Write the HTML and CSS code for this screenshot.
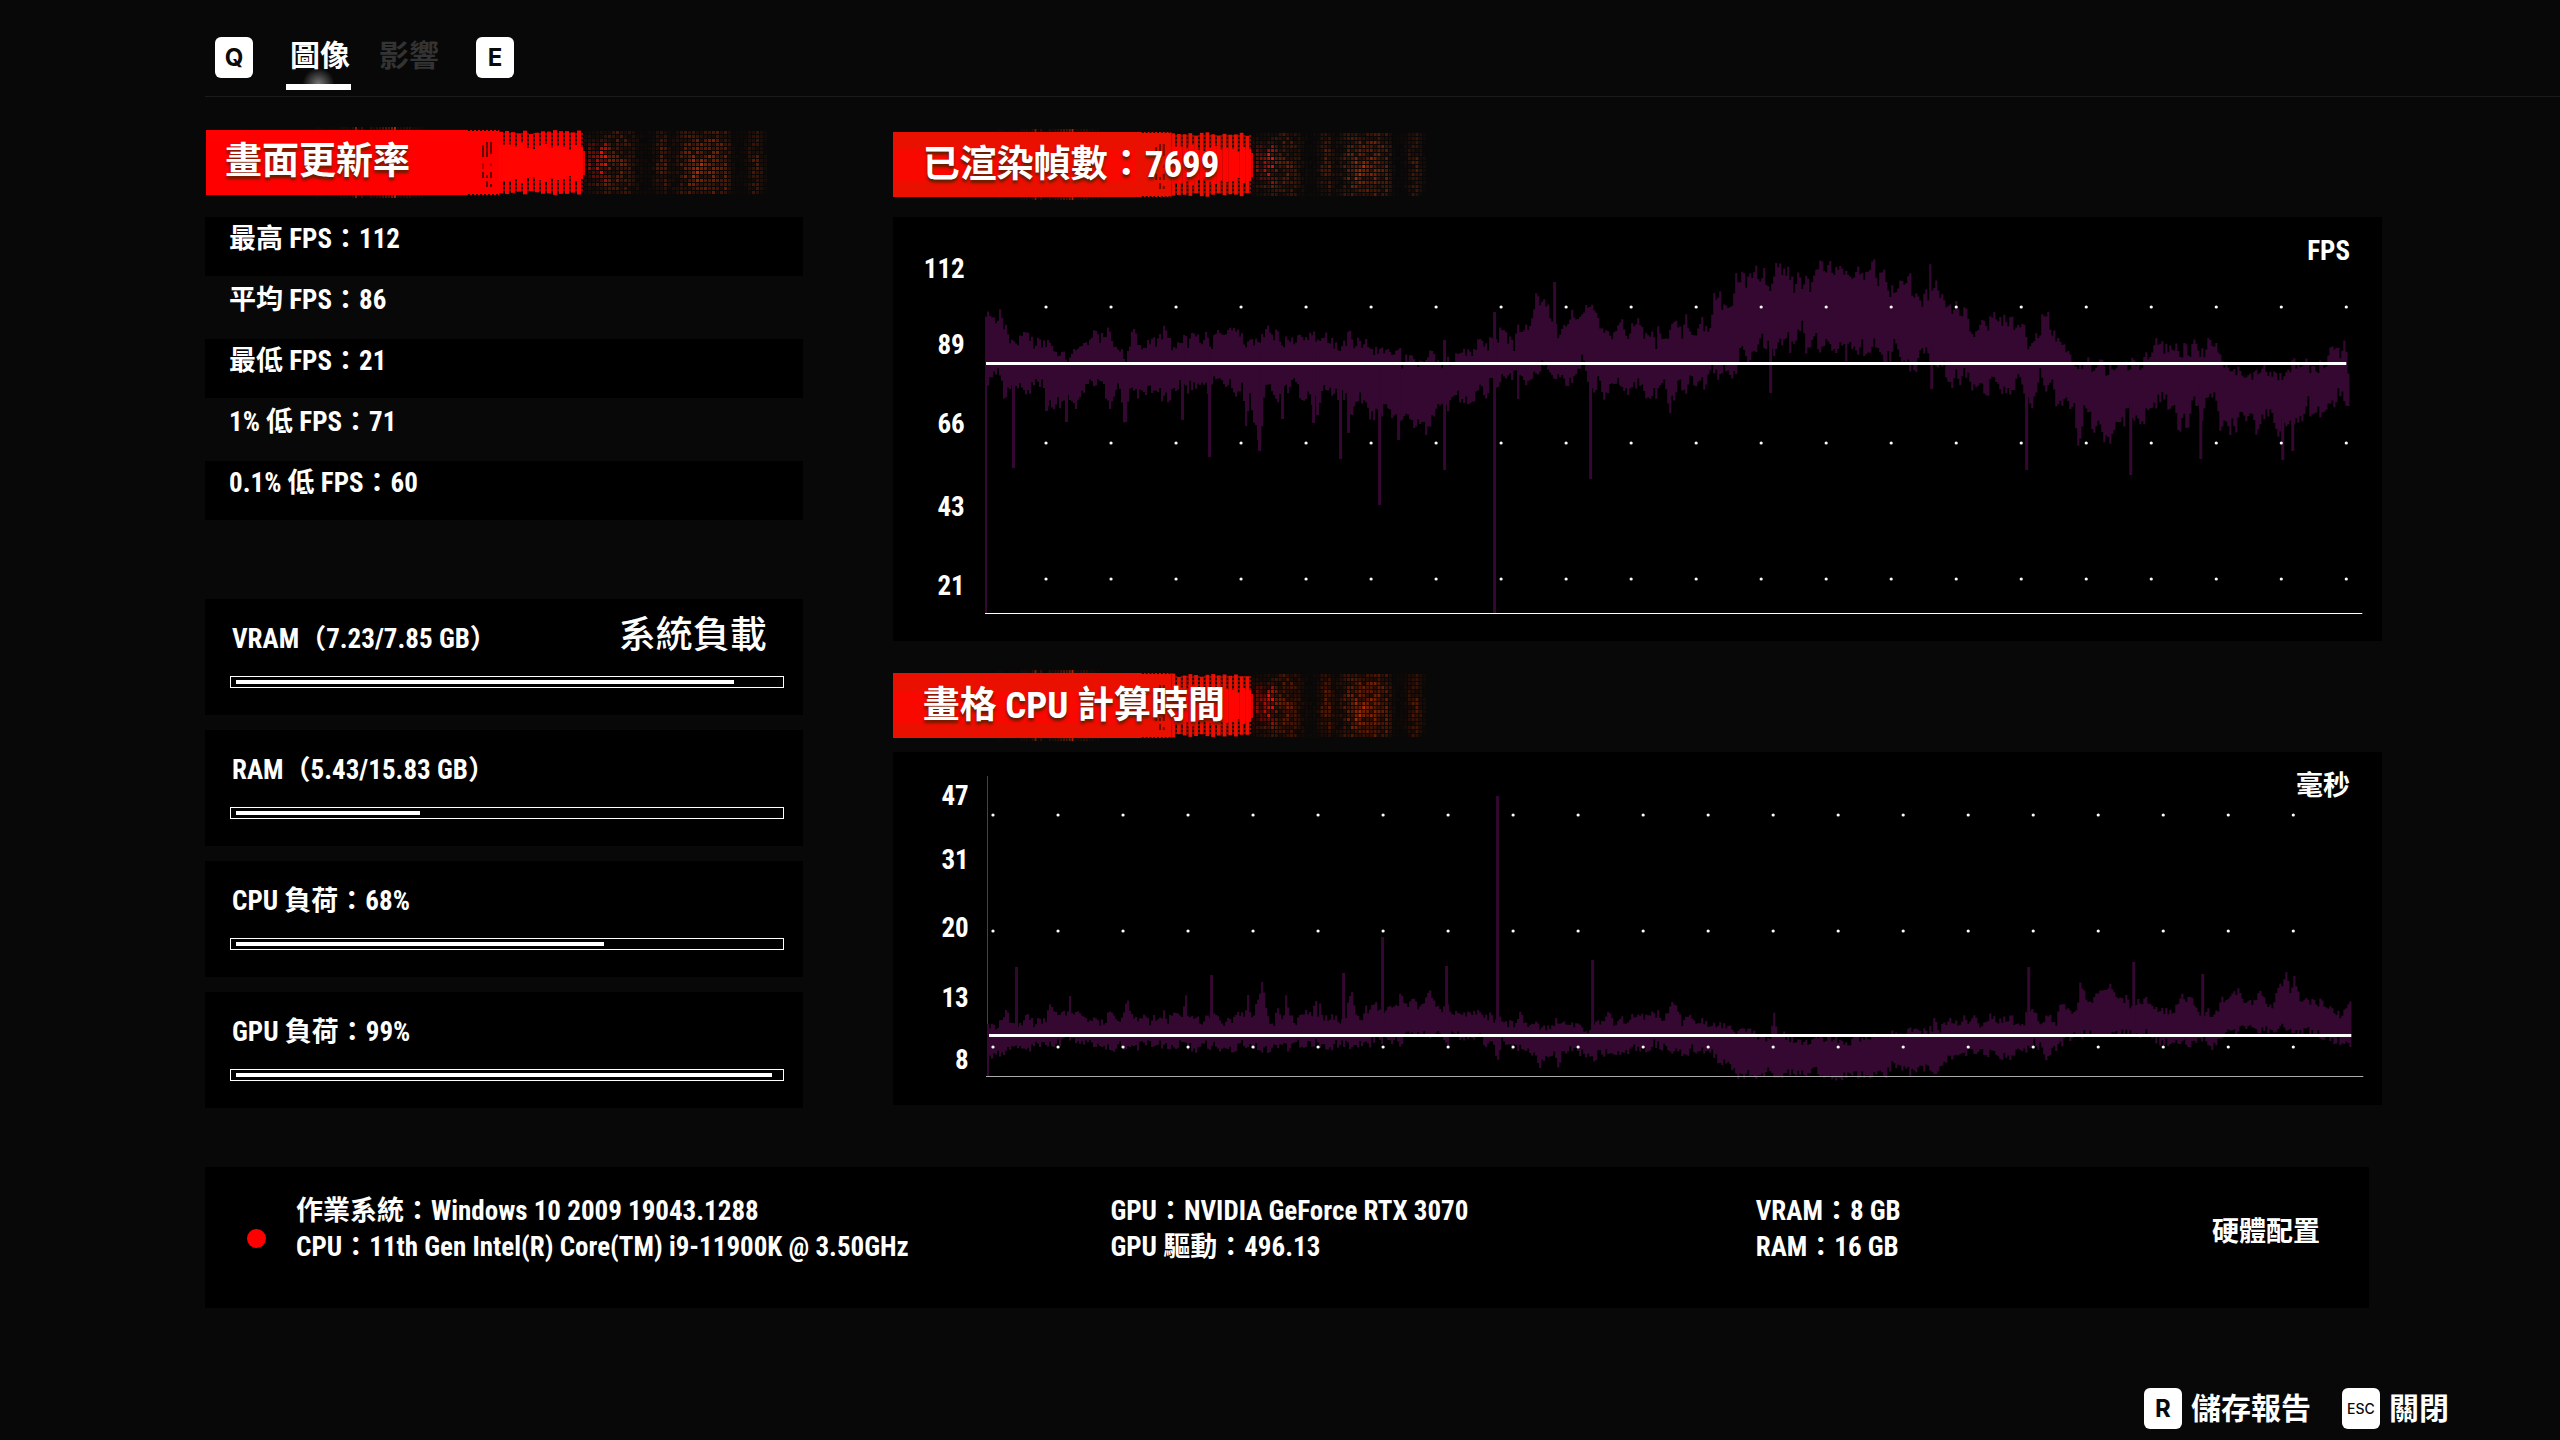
FILE: index.html
```html
<!DOCTYPE html>
<html lang="zh-Hant">
<head>
<meta charset="utf-8">
<title>效能測試結果</title>
<link rel="stylesheet" href="styles.css">
</head>
<body>
<header class="topbar">
  <kbd class="key">Q</kbd>
  <nav class="tabs">
    <a class="tab tab-active" href="#graphics">圖像</a>
    <a class="tab" href="#impact">影響</a>
  </nav>
  <kbd class="key">E</kbd>
</header>

<main class="report">
  <div class="columns">
    <section class="stats">
      <h2 class="banner"><svg class="banner-art" viewBox="0 0 600 73" preserveAspectRatio="none" aria-hidden="true"></svg><span class="banner-text">畫面更新率</span></h2>
      <ul class="rates">
        <li class="rate">最高 FPS：112</li>
        <li class="rate">平均 FPS：86</li>
        <li class="rate">最低 FPS：21</li>
        <li class="rate">1% 低 FPS：71</li>
        <li class="rate">0.1% 低 FPS：60</li>
      </ul>
      <div class="loads">
        <div class="load">
          <div class="load-head"><span>VRAM（7.23/7.85 GB）</span><h3 class="load-title">系統負載</h3></div>
          <div class="meter"><div class="meter-fill" style="width:92%"></div></div>
        </div>
        <div class="load">
          <div class="load-head"><span>RAM（5.43/15.83 GB）</span></div>
          <div class="meter"><div class="meter-fill" style="width:34%"></div></div>
        </div>
        <div class="load">
          <div class="load-head"><span>CPU 負荷：68%</span></div>
          <div class="meter"><div class="meter-fill" style="width:68%"></div></div>
        </div>
        <div class="load">
          <div class="load-head"><span>GPU 負荷：99%</span></div>
          <div class="meter"><div class="meter-fill" style="width:99%"></div></div>
        </div>
      </div>
    </section>

    <section class="charts">
      <h2 class="banner banner-wide"><svg class="banner-art" viewBox="0 0 600 73" preserveAspectRatio="none" aria-hidden="true"></svg><span class="banner-text">已渲染幀數：7699</span></h2>
      <figure class="chart chart-fps">
        <div class="axis"><span>112</span><span>89</span><span>66</span><span>43</span><span>21</span></div>
        <svg class="plot" id="fps-plot" viewBox="985 217 1397 424" preserveAspectRatio="none"></svg>
        <figcaption class="unit">FPS</figcaption>
      </figure>
      <h2 class="banner banner-wide"><svg class="banner-art" viewBox="0 0 600 73" preserveAspectRatio="none" aria-hidden="true"></svg><span class="banner-text">畫格 CPU 計算時間</span></h2>
      <figure class="chart chart-cpu">
        <div class="axis"><span>47</span><span>31</span><span>20</span><span>13</span><span>8</span></div>
        <svg class="plot" id="cpu-plot" viewBox="985 752 1397 353" preserveAspectRatio="none"></svg>
        <figcaption class="unit">毫秒</figcaption>
      </figure>
    </section>
  </div>

  <section class="hardware">
    <span class="record-dot"></span>
    <div class="spec">
      <p>作業系統：Windows 10 2009 19043.1288</p>
      <p>CPU：11th Gen Intel(R) Core(TM) i9-11900K @ 3.50GHz</p>
    </div>
    <div class="spec">
      <p>GPU：NVIDIA GeForce RTX 3070</p>
      <p>GPU 驅動：496.13</p>
    </div>
    <div class="spec">
      <p>VRAM：8 GB</p>
      <p>RAM：16 GB</p>
    </div>
    <h3 class="hardware-title">硬體配置</h3>
  </section>
</main>

<footer class="actions">
  <button class="action" type="button"><kbd class="key">R</kbd>儲存報告</button>
  <button class="action" type="button"><kbd class="key key-small">ESC</kbd>關閉</button>
</footer>
<script src="charts.js"></script>
</body>
</html>
```
FILE: styles.css
```css
* { box-sizing: border-box; margin: 0; padding: 0; }

body {
  min-height: 100vh;
  background: #080808;
  color: #fff;
  font-family: "Roboto Condensed", "Liberation Sans Narrow", "Noto Sans CJK TC", sans-serif;
  font-size: 27px;
  font-weight: 700;
  line-height: 36px;
}

.topbar {
  display: flex;
  align-items: flex-start;
  height: 97px;
  margin-left: 205px;
  padding: 37px 10px 0;
  border-bottom: 1px solid #1a1a1a;
}

.key {
  display: flex;
  align-items: center;
  justify-content: center;
  width: 38px;
  height: 41px;
  border-radius: 6px;
  background: #fff;
  color: #0a0a0a;
  font-family: Inter, "Liberation Sans", sans-serif;
  font-size: 24px;
  font-weight: 700;
  line-height: 28px;
}
.key-small { font-size: 14px; font-weight: 500; }

.tabs { display: flex; gap: 24px; margin: 0 36px 0 33px; }
.tab {
  height: 53px;
  padding: 0 1px 0 4px;
  color: #333;
  font-size: 30px;
  line-height: 38px;
  text-decoration: none;
}
.tab-active {
  border-bottom: 6px solid #fff;
  background: radial-gradient(ellipse 16px 16px at 50% 100%, #777, transparent);
  color: #fff;
}

.report { padding: 33px 178px 0 205px; }
.columns { display: grid; grid-template-columns: 598fr 1490fr; column-gap: 90px; }

.banner { position: relative; height: 65px; font-size: 37px; line-height: 64px; padding-left: 20px; }
.banner-wide { padding-left: 30px; line-height: 66px; }
.banner-art { position: absolute; top: -4px; left: 1px; width: 600px; height: 73px; }
.banner-wide .banner-art { width: 570px; left: 0; }
.banner-text { position: relative; text-shadow: 0 3px 3px #5a2000; }

.rates { display: grid; gap: 2px; margin-top: 22px; list-style: none; }
.rate { height: 59px; padding-left: 24px; line-height: 44px; }
.rate:nth-child(odd) { background: #000; }

.loads { display: grid; gap: 15px; margin-top: 79px; }
.load { height: 116px; padding: 16px 19px 0 25px; background: #000; }
.load-head { display: flex; justify-content: space-between; height: 61px; padding-left: 2px; line-height: 48px; }
.load-title { padding-right: 17px; font-size: 37px; font-weight: 500; line-height: 42px; }
.meter { height: 12px; padding: 3px 5px; border: 1px solid #fff; }
.meter-fill { height: 4px; background: #fff; }

.charts { padding-top: 2px; }
.chart { position: relative; display: grid; grid-template-columns: 92px 1fr; background: #000; }
.chart-fps { height: 424px; margin: 20px 0 32px; }
.chart-cpu { height: 353px; margin-top: 14px; }
.axis { display: grid; align-content: start; padding-right: 20px; text-align: right; }
.chart-fps .axis { grid-template-rows: 76px 79px 83px 79px 36px; padding-top: 34px; }
.chart-cpu .axis { grid-template-rows: 64px 68px 70px 62px 36px; padding-top: 26px; padding-right: 16px; }
.plot { display: block; width: 100%; height: 100%; }
.series { fill: #340830; }
.unit { position: absolute; top: 16px; right: 32px; }

.hardware {
  display: grid;
  grid-template-columns: 91px 814fr 645fr 456fr auto;
  height: 141px;
  margin: 59px 13px 0 0;
  padding: 26px 49px 0 0;
  background: #000;
}
.record-dot { width: 19px; height: 19px; margin: 36px 0 0 42px; border-radius: 50%; background: #f00; }
.hardware-title { padding-top: 21px; font-size: 27px; }

.actions { display: flex; justify-content: flex-end; gap: 31px; padding: 80px 111px 11px 0; }
.action {
  display: flex;
  align-items: center;
  gap: 9px;
  height: 41px;
  border: 0;
  background: none;
  color: #fff;
  font: inherit;
  font-size: 30px;
}
```
FILE: charts.js
```js
const NS = "http://www.w3.org/2000/svg";

function add(parent, name, attrs) {
  const node = document.createElementNS(NS, name);
  for (const key in attrs) node.setAttribute(key, attrs[key]);
  parent.appendChild(node);
  return node;
}

function noise(n) {
  const v = Math.sin(n * 127.1) * 43758.5453;
  return v - Math.floor(v);
}

// Linear value of a flat [x, y, x, y, ...] list at x.
function valueAt(points, x) {
  if (x <= points[0]) return points[1];
  for (let i = 2; i < points.length; i += 2) {
    if (x <= points[i]) {
      const t = (x - points[i - 2]) / (points[i] - points[i - 2]);
      return points[i - 1] + t * (points[i + 1] - points[i - 1]);
    }
  }
  return points[points.length - 1];
}

function drawSeries(svg, s) {
  let d = "";
  for (let x = s.from; x < s.to; x += 2) {
    const top = valueAt(s.top, x) + (noise(x) - 0.55) * s.jitter;
    const bottom = valueAt(s.bottom, x) - (noise(x + 0.5) - 0.55) * s.jitter;
    d += `M${x} ${top.toFixed(1)}h2.2V${bottom.toFixed(1)}h-2.2z`;
  }
  add(svg, "path", { d, class: "series" });
  s.spikes.forEach(([x, tip, base]) => {
    add(svg, "path", { d: `M${x - 1} ${tip}h3V${base}h-3z`, class: "series" });
  });
}

function drawDots(svg, x0, rows) {
  rows.forEach(y => {
    for (let i = 0; i < 21; i++) add(svg, "circle", { cx: x0 + i * 65, cy: y, r: 1.6, fill: "#fff" });
  });
}

const fps = {
  from: 985, to: 2348, jitter: 13,
  top: [985,323,989,312,995,324,1000,314,1003,326,1008,339,1016,342,1022,329,1025,337,1033,343,1046,341,1056,351,1067,356,1069,362,1071,351,1079,344,1087,340,1094,334,1100,338,1110,328,1112,344,1119,346,1125,358,1131,336,1133,330,1136,344,1144,352,1148,339,1156,341,1165,330,1169,341,1175,353,1182,339,1188,344,1193,328,1196,341,1205,337,1209,346,1217,335,1224,333,1231,328,1234,337,1240,334,1245,343,1259,342,1266,325,1272,334,1280,339,1288,346,1295,340,1305,344,1313,334,1318,342,1322,336,1332,344,1339,349,1350,335,1352,344,1358,341,1366,346,1369,355,1379,350,1389,356,1399,347,1401,363,1408,354,1416,362,1430,356,1439,365,1446,363,1454,360,1462,355,1471,353,1480,341,1486,346,1497,337,1502,328,1507,338,1513,347,1517,326,1520,342,1523,330,1530,322,1535,296,1540,301,1547,308,1552,323,1557,333,1563,330,1568,323,1572,310,1575,322,1580,320,1586,304,1590,308,1594,317,1597,325,1605,330,1611,343,1613,328,1623,325,1627,335,1637,323,1642,333,1652,337,1655,345,1658,327,1665,343,1673,325,1677,322,1681,333,1685,316,1688,333,1694,333,1700,320,1703,328,1710,325,1713,300,1719,296,1722,312,1725,304,1728,315,1732,303,1735,268,1738,290,1742,273,1745,287,1748,275,1753,277,1756,263,1758,287,1763,271,1767,288,1773,280,1775,264,1779,263,1782,277,1787,268,1793,287,1797,273,1802,287,1807,275,1809,287,1813,275,1821,264,1825,271,1830,267,1834,275,1837,264,1843,270,1849,272,1852,288,1858,267,1863,277,1868,268,1873,266,1876,292,1880,272,1883,271,1886,288,1889,298,1892,289,1894,300,1898,283,1905,282,1909,275,1912,298,1916,290,1922,305,1926,287,1928,303,1929,271,1932,297,1934,279,1938,290,1943,305,1950,310,1954,304,1958,315,1966,313,1968,333,1973,338,1977,330,1981,318,1987,325,1991,317,2002,323,2004,315,2007,322,2016,325,2023,321,2025,343,2030,348,2034,337,2039,330,2042,302,2044,323,2047,313,2049,335,2053,329,2058,347,2062,347,2070,357,2073,362,2080,367,2086,363,2093,372,2100,365,2105,372,2113,367,2120,370,2123,360,2127,373,2132,359,2138,370,2146,355,2150,360,2154,343,2160,345,2163,352,2172,347,2176,342,2180,355,2184,343,2188,363,2193,342,2200,355,2206,350,2209,335,2212,345,2217,352,2223,362,2228,372,2233,368,2240,377,2248,378,2255,373,2258,380,2263,370,2273,372,2277,387,2280,375,2290,372,2292,361,2295,370,2305,365,2310,372,2317,368,2325,363,2327,352,2335,343,2338,355,2344,341,2346,366,2348,390],
  bottom: [985,385,989,379,995,368,1000,371,1002,396,1005,396,1008,384,1020,382,1025,392,1031,384,1041,382,1046,401,1054,404,1060,401,1069,396,1074,407,1079,396,1087,385,1094,380,1102,377,1108,407,1112,394,1117,385,1121,397,1124,425,1129,389,1134,395,1144,392,1154,385,1161,397,1168,399,1173,385,1179,385,1186,387,1194,382,1201,382,1206,389,1213,382,1219,373,1224,389,1230,380,1238,396,1242,385,1245,420,1249,394,1255,430,1259,440,1263,399,1268,375,1272,396,1276,400,1286,389,1293,382,1301,396,1307,396,1317,403,1324,385,1335,392,1344,396,1351,413,1358,394,1370,415,1385,408,1393,413,1404,416,1412,422,1420,418,1425,432,1431,416,1439,406,1448,406,1454,396,1462,396,1469,403,1480,389,1487,393,1489,382,1497,383,1507,375,1515,373,1517,394,1520,373,1526,385,1530,377,1536,378,1538,365,1542,364,1545,370,1552,373,1554,386,1558,373,1567,382,1575,378,1578,365,1582,358,1586,370,1588,400,1592,390,1597,380,1602,392,1606,399,1608,383,1618,378,1622,387,1632,389,1638,377,1643,392,1652,393,1657,393,1660,373,1665,392,1669,410,1671,390,1674,403,1677,380,1682,387,1685,394,1688,380,1697,380,1704,384,1708,367,1713,370,1716,378,1722,367,1729,372,1735,372,1738,353,1743,343,1747,367,1750,347,1757,345,1762,335,1764,352,1768,343,1773,350,1778,338,1782,343,1787,337,1789,348,1795,335,1802,322,1805,347,1812,343,1815,337,1818,349,1825,340,1830,347,1837,347,1840,335,1845,358,1848,343,1855,356,1860,340,1864,353,1872,342,1879,358,1887,355,1891,357,1894,335,1898,358,1903,363,1910,365,1914,373,1918,357,1923,347,1928,362,1934,360,1940,367,1943,363,1947,385,1952,385,1955,373,1959,389,1963,370,1967,377,1971,393,1973,380,1982,388,1986,393,1990,382,1998,383,2004,394,2008,387,2012,389,2018,377,2022,387,2024,407,2028,400,2033,402,2036,382,2038,370,2042,385,2045,394,2050,378,2054,397,2058,413,2060,400,2070,403,2074,410,2076,443,2078,443,2081,420,2084,407,2088,410,2092,432,2097,418,2100,427,2103,443,2106,430,2109,439,2113,427,2117,415,2123,423,2127,403,2132,417,2137,418,2143,420,2147,408,2155,403,2162,393,2168,407,2173,405,2178,435,2182,415,2186,429,2189,407,2193,400,2198,413,2202,420,2205,393,2208,390,2215,397,2219,430,2223,418,2229,437,2231,420,2234,433,2237,415,2245,420,2252,413,2255,433,2258,417,2263,417,2270,408,2276,427,2278,443,2280,423,2285,422,2289,420,2294,417,2300,415,2303,417,2307,402,2311,418,2314,407,2318,414,2322,403,2326,414,2328,397,2332,402,2338,392,2341,390,2344,403,2346,412,2348,400],
  spikes: [[1013,468,350],[1046,411,350],[1066,422,370],[1182,420,350],[1209,457,350],[1259,451,350],[1282,419,350],[1313,423,350],[1317,415,350],[1340,459,360],[1348,433,360],[1379,505,360],[1398,440,360],[1444,470,340],[1494,613,312],[1554,282,360],[1590,479,360],[1770,393,320],[1931,389,340],[2026,470,360],[2130,475,380],[2200,459,380],[2282,460,390],[2292,451,390]]
};

const cpu = {
  from: 987, to: 2351, jitter: 9,
  top: [987,1028,991,1023,995,1030,999,1025,1003,1015,1007,1014,1010,1023,1020,1023,1026,1017,1033,1023,1045,1018,1049,1005,1054,1010,1060,1013,1066,1012,1069,999,1072,1017,1076,1008,1083,1016,1090,1020,1104,1023,1110,1007,1115,1018,1121,1018,1126,996,1131,1017,1136,1022,1144,1016,1150,1023,1154,1015,1158,1022,1162,1013,1167,1022,1171,1012,1177,1018,1182,1015,1185,999,1188,1020,1193,1015,1198,1022,1208,1018,1214,1017,1223,1025,1226,1018,1232,1022,1238,1015,1244,1013,1247,996,1250,1023,1254,1010,1259,993,1262,980,1265,1007,1268,1022,1273,1022,1278,1010,1282,1017,1285,1000,1288,1017,1295,1023,1305,1015,1311,1017,1315,998,1317,1017,1319,1003,1322,1020,1334,1017,1339,1022,1345,1015,1351,992,1355,1012,1358,1022,1365,1010,1368,1017,1373,1003,1378,1010,1385,1013,1393,1005,1397,1005,1400,987,1404,1007,1408,1002,1414,998,1418,1008,1423,1000,1428,991,1431,1002,1439,1010,1448,1008,1454,1015,1462,1017,1473,1012,1480,1015,1489,1017,1503,1022,1515,1025,1519,1015,1524,1025,1533,1022,1545,1030,1550,1025,1557,1020,1562,1025,1577,1025,1584,1033,1597,1025,1608,1013,1612,1023,1624,1020,1636,1018,1647,1015,1659,1015,1663,1020,1671,1006,1677,1008,1681,1022,1688,1015,1697,1022,1706,1022,1712,1028,1718,1025,1732,1030,1741,1032,1749,1030,1756,1037,1762,1035,1768,1040,1773,1015,1776,1033,1785,1037,1797,1040,1806,1043,1812,1038,1826,1040,1835,1038,1847,1043,1859,1038,1876,1038,1891,1035,1903,1035,1908,1029,1917,1027,1923,1033,1931,1030,1933,1018,1938,1030,1944,1025,1952,1019,1957,1028,1962,1018,1967,1027,1973,1016,1979,1027,1988,1016,1996,1023,2006,1018,2017,1023,2023,1023,2026,1013,2032,1010,2040,1022,2046,1017,2055,1022,2060,1005,2070,1012,2076,1007,2079,985,2082,988,2087,1007,2095,995,2102,995,2106,985,2113,990,2117,1003,2126,998,2130,1010,2136,1003,2146,1000,2152,1010,2164,1013,2172,1012,2181,990,2184,1007,2188,996,2193,1007,2199,1013,2207,1013,2216,1015,2221,995,2226,1003,2232,990,2237,993,2243,1003,2255,1002,2258,992,2262,1002,2272,1005,2280,985,2285,973,2290,998,2293,980,2299,1002,2313,1003,2322,1003,2328,1007,2340,1015,2349,1005,2351,1013],
  bottom: [987,1057,991,1057,995,1050,1002,1055,1006,1048,1014,1043,1025,1048,1033,1045,1045,1043,1058,1043,1062,1037,1071,1038,1079,1043,1094,1043,1106,1045,1114,1049,1119,1043,1127,1047,1136,1049,1140,1043,1156,1043,1165,1047,1175,1045,1184,1043,1194,1049,1201,1043,1217,1047,1224,1049,1232,1048,1242,1043,1251,1045,1268,1050,1274,1045,1288,1048,1297,1043,1305,1045,1312,1042,1330,1048,1333,1042,1353,1046,1360,1043,1368,1045,1372,1038,1389,1041,1395,1037,1400,1043,1404,1035,1416,1032,1425,1035,1439,1034,1446,1045,1450,1034,1466,1037,1480,1037,1483,1042,1492,1045,1497,1057,1501,1042,1515,1047,1527,1050,1539,1063,1545,1060,1553,1052,1557,1069,1561,1052,1568,1048,1586,1055,1592,1060,1597,1053,1615,1052,1636,1047,1647,1048,1653,1043,1665,1048,1680,1052,1687,1056,1691,1047,1700,1052,1706,1047,1718,1062,1729,1062,1737,1076,1750,1071,1759,1077,1768,1070,1778,1077,1791,1071,1803,1073,1815,1070,1825,1077,1840,1076,1856,1075,1867,1073,1873,1076,1885,1073,1891,1065,1903,1068,1911,1072,1923,1067,1932,1073,1941,1065,1947,1058,1958,1057,1967,1052,1976,1050,1994,1055,2005,1057,2017,1052,2026,1050,2032,1042,2040,1047,2045,1062,2052,1048,2058,1047,2064,1038,2076,1035,2090,1033,2102,1035,2114,1030,2134,1035,2146,1033,2158,1042,2178,1043,2193,1043,2205,1038,2211,1047,2219,1038,2228,1032,2249,1027,2266,1030,2281,1027,2302,1030,2313,1033,2328,1037,2340,1042,2349,1043],
  spikes: [[1016,967,1030],[1211,975,1030],[1343,973,1030],[1382,937,1030],[1446,966,1030],[1497,796,1030],[1592,960,1030],[2028,967,1030],[2133,962,1030],[2202,974,1030]]
};

const fpsPlot = document.getElementById("fps-plot");
drawSeries(fpsPlot, fps);
add(fpsPlot, "rect", { x: 985, y: 323, width: 2, height: 290, class: "series" });
drawDots(fpsPlot, 1046, [307, 443, 579]);
add(fpsPlot, "rect", { x: 986, y: 362, width: 1360, height: 3, fill: "#fff" });
add(fpsPlot, "rect", { x: 985, y: 613, width: 1377, height: 1, fill: "#fff" });

const cpuPlot = document.getElementById("cpu-plot");
add(cpuPlot, "rect", { x: 987, y: 776, width: 1, height: 300, fill: "#444" });
drawSeries(cpuPlot, cpu);
add(cpuPlot, "rect", { x: 987, y: 1030, width: 2, height: 46, class: "series" });
drawDots(cpuPlot, 993, [815, 931, 1047]);
add(cpuPlot, "rect", { x: 989, y: 1034, width: 1362, height: 3, fill: "#fff" });
add(cpuPlot, "rect", { x: 986, y: 1076, width: 1377, height: 1, fill: "#aaa" });

// Brightness of the halftone tail at x, for a distance d (0..1) from the centre line.
function glow(x, d) {
  const bands = [[384, 6, 0.5, 1], [395, 6, 1, 1], [412, 14, 0.4, 0.3], [455, 7, 0.45, 0.6], [478, 8, 0.35, 0.3], [490, 9, 0.8, 0.8], [506, 9, 0.5, 0.3], [518, 5, 0.35, 0.3], [548, 7, 0.35, 0.5]];
  let v = 0.03;
  bands.forEach(([c, w, a, fall]) => { v += a * (1 - fall * d) * Math.exp(-((x - c) * (x - c)) / (w * w)); });
  return v;
}

document.querySelectorAll(".banner-art").forEach((svg, index) => {
  const red = index ? "#ea1000" : "#ff0000";
  const back = "#1a0600";
  add(svg, "rect", { x: 0, y: 4, width: 293, height: 65, fill: red });
  if (index) {
    add(svg, "rect", { x: 0, y: 22, width: 255, height: 32, fill: "#ff0600", opacity: 0.7 });
  }
  // Ragged fringe above and below the block.
  for (let x = 110; x < 218; x += 3) {
    const o = (Math.exp(-Math.pow((x - 188) / 12, 2)) + Math.exp(-Math.pow((x - 152) / 9, 2)) * 0.6 + 0.1) * noise(x);
    add(svg, "rect", { x, y: 1, width: 2, height: 3, fill: "#c03000", opacity: o.toFixed(2) });
    add(svg, "rect", { x, y: 69, width: 2, height: 3, fill: "#c03000", opacity: o.toFixed(2) });
  }
  // Notches eaten out of the block's right end.
  for (let x = 262; x < 293; x += 4) {
    add(svg, "rect", { x, y: 3, width: 2, height: 2, fill: back });
    add(svg, "rect", { x, y: 68, width: 2, height: 2, fill: back });
  }
  for (let x = 276; x < 288; x += 4) {
    for (let y = 16; y < 60; y += 3) {
      const mid = Math.abs(y - 37) < 9;
      if (noise(x * 3 + y) > (mid ? 0.7 : 0.3)) add(svg, "rect", { x, y, width: 2, height: 3, fill: "#4a0a00", opacity: mid ? 0.4 : 0.85 });
    }
  }
  // Stripes that join along the centre line.
  for (let x = 293; x < 374; x += 6) {
    const reach = 4 + noise(x + index) * 4;
    add(svg, "rect", { x, y: reach, width: 4, height: 73 - 2 * reach, fill: red });
    const core = 15 + noise(x + 7) * 7 - (x - 293) / 20;
    add(svg, "rect", { x, y: 37 - core, width: 6, height: core * 2, fill: "#ff0400" });
    for (let y = 7; y < 66; y += 4) {
      if (Math.abs(y - 37) > core) add(svg, "rect", { x: x + 4, y, width: 2, height: 2, fill: red, opacity: 0.6 });
    }
  }
  add(svg, "rect", { x: 374, y: 25, width: 5, height: 24, fill: "#ff0400", opacity: 0.85 });
  // Dots that fade out to the right.
  for (let x = 374; x < 562; x += 4) {
    for (let y = 5; y < 68; y += 4) {
      const d = Math.abs(y - 36) / 33;
      const o = glow(x, d) * (0.25 + noise(x * 1.7 + y * 0.9));
      const fill = x < 402 && d < 0.6 ? "#ff1400" : "#d03800";
      add(svg, "rect", { x, y, width: 3, height: 3, fill, opacity: Math.min(1, o).toFixed(2) });
    }
  }
});
```
